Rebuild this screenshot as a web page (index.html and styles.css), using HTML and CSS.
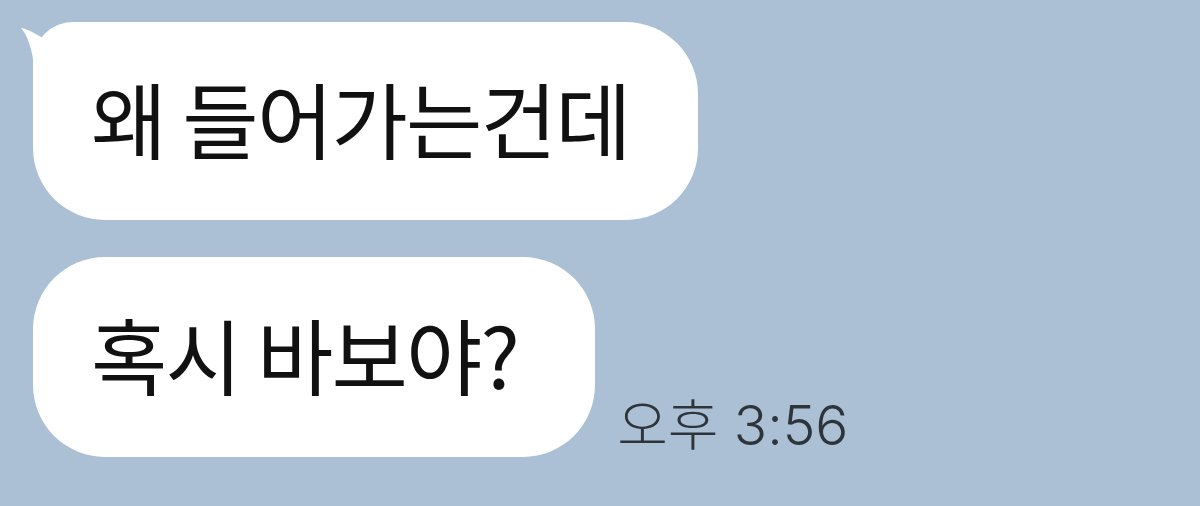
FILE: index.html
```html
<!DOCTYPE html>
<html>
<head>
	<meta charset="UTF-8">
	<title>채팅</title>
	<link rel="stylesheet" href="styles.css">
</head>
<body>
	<div class="chat">
		<div class="row">
			<div class="bubble first">
				<svg class="tail" width="60" height="50" viewBox="0 0 60 50">
					<path d="M0 0 C8 1 20 9 36 19 C42 11 50 4 60 0 L60 50 L14 50 C13 30 9 10 0 0 Z" fill="#fff"/>
				</svg>
				<span class="msg">왜 들어가는건데</span>
			</div>
		</div>
		<div class="row">
			<div class="bubble last">
				<span class="msg">혹시 바보야?</span>
			</div>
			<span class="time">오후 3:56</span>
		</div>
	</div>
</body>
</html>
```

FILE: styles.css
```css
html, body{
	margin:0;
	padding:0;
	height:100%;
}
body{
	background:#abc0d4;
	font-family:"Noto Sans CJK KR", "Noto Sans", sans-serif;
	overflow:hidden;
}
.chat{
	display:flex;
	flex-direction:column;
	gap:37px;
	padding:22px 0 0 33px;
}
.row{
	display:flex;
	align-items:flex-end;
	gap:22px;
}
.bubble{
	position:relative;
	background:#fff;
	border-radius:72px;
	height:198px;
	display:flex;
	align-items:center;
	padding:0 68px 0 58px;
	box-sizing:border-box;
}
.bubble.first{
	border-top-left-radius:40px;
}
.bubble.last{
	height:200px;
	padding-right:77px;
}
.tail{
	position:absolute;
	left:-12px;
	top:6px;
}
.msg{
	font-size:83px;
	letter-spacing:-1.8px;
	color:#111;
	white-space:nowrap;
	line-height:1;
	padding-bottom:8px;
}
.time{
	font-family:"Inter", "Noto Sans CJK KR", sans-serif;
	font-size:55px;
	font-weight:300;
	color:#2e343a;
	line-height:1;
	padding-bottom:4px;
}
```
